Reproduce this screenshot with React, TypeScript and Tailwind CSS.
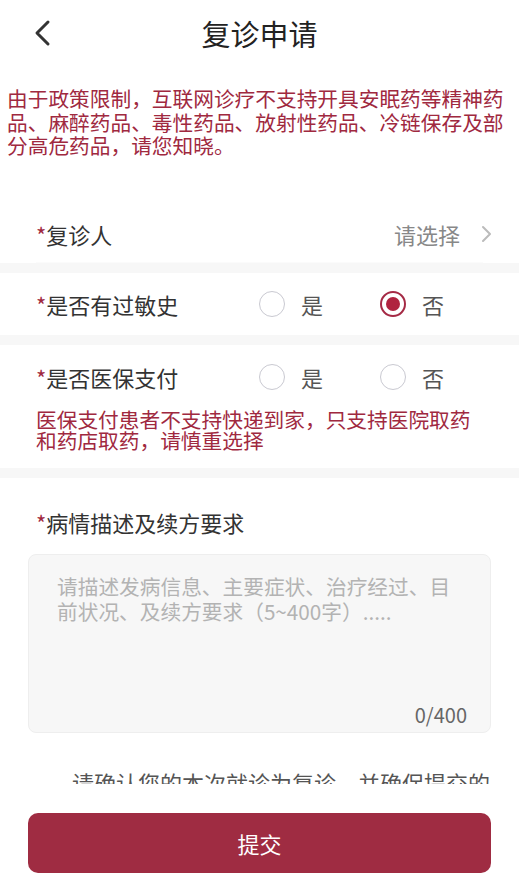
import React from 'react';

const RED = 'text-[#a0293f]';

function Radio({ checked }: { checked?: boolean }) {
  if (checked) {
    return (
      <span className="flex h-[26px] w-[26px] items-center justify-center rounded-full border-2 border-[#a52a45]">
        <span className="h-[14px] w-[14px] rounded-full bg-[#b0233f]" />
      </span>
    );
  }
  return <span className="h-[26px] w-[26px] rounded-full border-[1.5px] border-[#c9c9d1]" />;
}

function RadioGroup({ value }: { value?: 'yes' | 'no' }) {
  return (
    <div className="flex items-center">
      <div className="flex items-center gap-[16px]">
        <Radio checked={value === 'yes'} />
        <span className="text-[22px] leading-[30px] text-[#555]">是</span>
      </div>
      <div className="ml-[57px] flex items-center gap-[16px]">
        <Radio checked={value === 'no'} />
        <span className="text-[22px] leading-[30px] text-[#555]">否</span>
      </div>
    </div>
  );
}

function Label({ children }: { children: React.ReactNode }) {
  return (
    <span className="text-[22px] leading-[30px] text-[#333]">
      <span className={RED}>*</span>
      {children}
    </span>
  );
}

export default function App() {
  return (
    <div
      className="flex h-[889px] w-full flex-col overflow-hidden bg-white"
      style={{ fontFamily: '"Noto Sans CJK SC", "Noto Sans", sans-serif' }}
    >
      {/* Header */}
      <div className="grid h-[66px] shrink-0 grid-cols-[1fr_auto_1fr] items-center">
        <div className="pl-[33px]">
          <svg width="18" height="28" viewBox="0 0 18 28" fill="none">
            <polyline points="15,3 4,14 15,25" stroke="#333" strokeWidth="3" strokeLinecap="round" strokeLinejoin="round" />
          </svg>
        </div>
        <h1 className="text-[29px] leading-[40px] text-[#222]">复诊申请</h1>
        <div />
      </div>

      {/* Scroll content */}
      <div className="flex-1 overflow-hidden">
        <p className={`mt-[21px] px-[7px] pb-[43px] text-[20.7px] leading-[23.5px] ${RED}`}>
          由于政策限制，互联网诊疗不支持开具安眠药等精神药品、麻醉药品、毒性药品、放射性药品、冷链保存及部分高危药品，请您知晓。
        </p>

        {/* 复诊人 */}
        <div className="mx-[36px] flex h-[62px] items-center border-b border-[#fbfbfb] pt-[6px]">
          <Label>复诊人</Label>
          <span className="ml-auto text-[22px] leading-[30px] text-[#888]">请选择</span>
          <svg className="ml-[20px] mr-[-9px]" width="12" height="20" viewBox="0 0 12 20" fill="none">
            <polyline points="3,3 10,10 3,17" stroke="#bbb" strokeWidth="2" strokeLinecap="round" strokeLinejoin="round" />
          </svg>
        </div>
        <div className="h-[10px] bg-[#f7f7f7]" />

        {/* 过敏史 */}
        <div className="flex h-[62px] items-center pl-[36px]">
          <div className="w-[223px]">
            <Label>是否有过敏史</Label>
          </div>
          <RadioGroup value="no" />
        </div>
        <div className="h-[10px] bg-[#f7f7f7]" />

        {/* 医保支付 */}
        <div className="pl-[36px] pb-[17px]">
          <div className="flex h-[64px] items-center">
            <div className="w-[223px]">
              <Label>是否医保支付</Label>
            </div>
            <RadioGroup />
          </div>
          <p className={`w-[445px] text-[20.7px] leading-[21px] ${RED}`}>
            医保支付患者不支持快递到家，只支持医院取药和药店取药，请慎重选择
          </p>
        </div>
        <div className="h-[10px] bg-[#f7f7f7]" />

        {/* 病情描述 */}
        <div className="pt-[29px] pl-[36px]">
          <Label>病情描述及续方要求</Label>
        </div>
        <div className="mx-[28px] mt-[17px] flex h-[179px] flex-col rounded-[8px] border border-[#eeeeee] bg-[#f7f7f7] pt-[19px] pr-[23px] pb-[4px] pl-[28px]">
          <p className="text-[20.7px] leading-[25px] text-[#b3b3b3]">
            请描述发病信息、主要症状、治疗经过、目前状况、及续方要求（5~400字）.....
          </p>
          <span className="mt-auto self-end text-[20px] leading-[26px] text-[#666]">0/400</span>
        </div>

        <p className="mt-[34px] pl-[72px] text-[22px] leading-[30px] whitespace-nowrap text-[#555]">
          请确认您的本次就诊为复诊，并确保提交的
        </p>
      </div>

      {/* Bottom bar */}
      <div className="h-[105px] shrink-0 bg-white px-[28px] pt-[29px]">
        <button className="flex h-[60px] w-full items-center justify-center rounded-[10px] bg-[#9f2c42] text-[22px] text-white">
          提交
        </button>
      </div>
    </div>
  );
}
